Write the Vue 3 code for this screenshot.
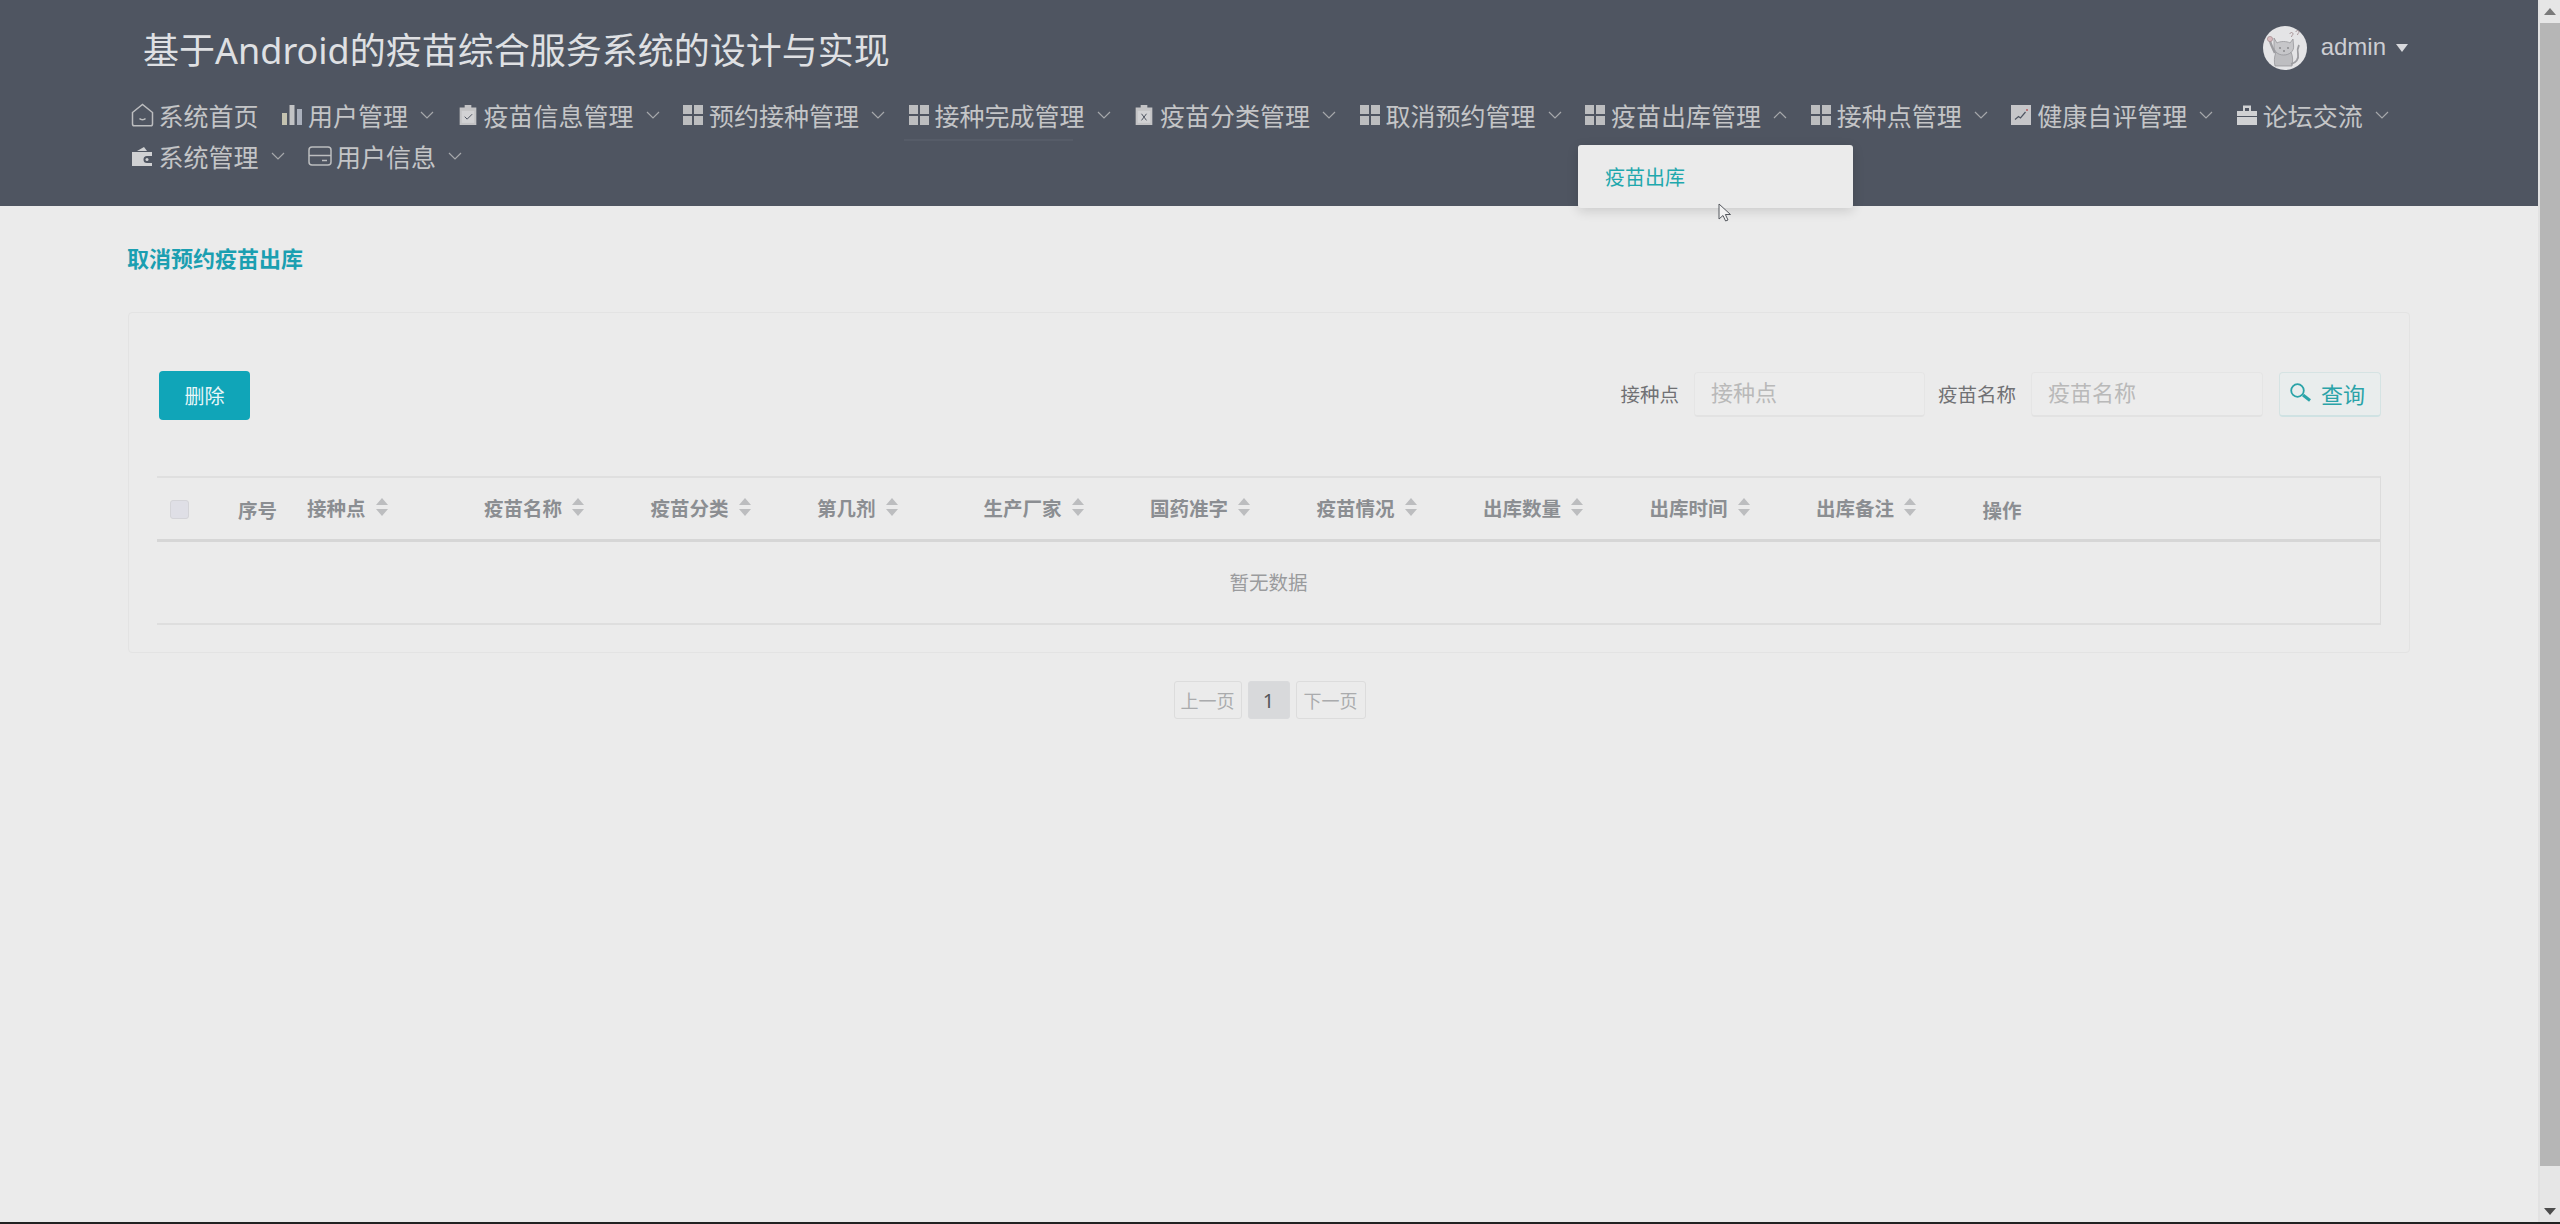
<script setup>
const navItems = [
  { name: "系统首页", icon: "home", arrow: false },
  { name: "用户管理", icon: "bars", arrow: true },
  { name: "疫苗信息管理", icon: "check", arrow: true },
  { name: "预约接种管理", icon: "grid", arrow: true },
  { name: "接种完成管理", icon: "grid", arrow: true, underline: true },
  { name: "疫苗分类管理", icon: "cross", arrow: true },
  { name: "取消预约管理", icon: "grid", arrow: true },
  { name: "疫苗出库管理", icon: "grid", arrow: true, open: true },
  { name: "接种点管理", icon: "grid", arrow: true },
  { name: "健康自评管理", icon: "chart", arrow: true },
  { name: "论坛交流", icon: "case", arrow: true },
  { name: "系统管理", icon: "wallet", arrow: true },
  { name: "用户信息", icon: "card", arrow: true },
]

const columns = ["接种点", "疫苗名称", "疫苗分类", "第几剂", "生产厂家", "国药准字", "疫苗情况", "出库数量", "出库时间", "出库备注"]
</script>

<template>
  <div class="screen">
    <div class="window">
      <main class="page">
        <header class="topbar">
          <div class="title-row">
            <h1>基于Android的疫苗综合服务系统的设计与实现</h1>
            <div class="user">
              <svg class="avatar" viewBox="0 0 44 44">
                <circle cx="22" cy="22" r="22" fill="#e4e4e6" />
                <!-- cat body, tail and head -->
                <path d="M13 26c-2 5-2 10-1 14h17c1-4 1-10-1-14z" fill="#bdbdc0" stroke="#8f8f93" stroke-width=".7" />
                <path d="M28 38c5-1 8-5 7-10-1-4 0-7 1-9" fill="none" stroke="#9c9ca0" stroke-width="1.8" />
                <path d="M11 12l3 5c3-2 10-2 13 0l3-4 .6 7c.6 5-4 9-10 9s-10-4-9.600-9z" fill="#c6c6c9" stroke="#8f8f93" stroke-width=".7" />
                <path d="M12 27c-2-4-4-8-5-12" fill="none" stroke="#9c9ca0" stroke-width="2.400" />
                <circle cx="7" cy="13" r="2.600" fill="#d7b9bd" stroke="#9a8084" stroke-width=".6" />
                <!-- confused marks -->
                <path d="M27 8c0-2 3-2 3 0 0 1-1.500 1.500-1.500 3M33 6c0-2 3-2 3 0 0 1-1.500 1.500-1.500 3" fill="none" stroke="#a08a8e" stroke-width=".9" />
                <path d="M16 22h2M24 22h2M20 25h2" stroke="#6c6c70" stroke-width="1.200" />
              </svg>
              <span class="user-name">admin</span>
              <span class="user-caret"></span>
            </div>
          </div>

          <nav class="nav">
            <div v-for="item in navItems" :key="item.name" class="nav-item">
              <svg v-if="item.icon === 'home'" class="icon icon-home" viewBox="0 0 23 24" fill="none" stroke="#bcbdbf" stroke-width="1.500">
                <path d="M1.500 9.500 11.500 1.500l10 8V21a1.800 1.800 0 0 1-1.800 1.800H3.300A1.800 1.800 0 0 1 1.500 21z" />
                <path d="M8.500 15.500c1.300 1.500 4.700 1.500 6 0" />
              </svg>
              <svg v-else-if="item.icon === 'bars'" class="icon" viewBox="0 0 20 20">
                <path d="M0 8h5v12H0z" fill="#c4c2b0" />
                <path d="M7.500 0h5v20h-5z" fill="#c2c3c5" />
                <path d="M15 4h5v16h-5z" fill="#aab0bc" />
              </svg>
              <svg v-else-if="item.icon === 'check'" class="icon" viewBox="0 0 20 24" fill="#c3c3c5">
                <path d="M0 3h6V0h8v3h6v21H0z" />
                <path d="M2.500 7h15v14.500h-15z" fill="#d2d2d4" />
                <path d="M6 14l3 3 6-6" fill="none" stroke="#4f5561" stroke-width="1.200" />
              </svg>
              <svg v-else-if="item.icon === 'grid'" class="icon" viewBox="0 0 20 20" fill="#bcbdbf">
                <path d="M0 0h9v9H0zM11 0h9v9h-9zM0 11h9v9H0zM11 11h9v9h-9z" />
              </svg>
              <svg v-else-if="item.icon === 'cross'" class="icon" viewBox="0 0 20 24" fill="#c3c3c5">
                <path d="M0 3h6V0h8v3h6v21H0z" />
                <path d="M2.500 7h15v14.500h-15z" fill="#d2d2d4" />
                <path d="M7 10.500l6 8M13 10.500l-6 8" fill="none" stroke="#4f5561" stroke-width="1.200" />
              </svg>
              <svg v-else-if="item.icon === 'chart'" class="icon" viewBox="0 0 20 20">
                <path d="M0 0h20v20H0z" fill="#c6c6c9" />
                <path d="M4 14.500l3.500-3 2 1.500 5-6" fill="none" stroke="#4f5561" stroke-width="1.200" />
                <circle cx="16" cy="5" r="1" fill="#b4565a" />
              </svg>
              <svg v-else-if="item.icon === 'case'" class="icon" viewBox="0 0 20 20" fill="#d0d1d3">
                <path d="M6 6V.500h8V6h-2V3H8v3z" />
                <path d="M0 6h20v5H0zM0 12h20v8H0z" />
              </svg>
              <svg v-else-if="item.icon === 'wallet'" class="icon icon-wide" viewBox="0 0 22 22" fill="#d0d1d3">
                <path d="M6 6 13 2l3 4z" />
                <path d="M1 7h20v4h-5a3.500 3.500 0 0 0 0 7h5v3H1z" />
                <circle cx="16" cy="14.500" r="1.500" />
              </svg>
              <svg v-else class="icon icon-card" viewBox="0 0 24 20" fill="none" stroke="#bcbdbf" stroke-width="1.500">
                <rect x="1" y="1" width="22" height="18" rx="3" />
                <path d="M1 9.500h22M14 14.500h5" />
              </svg>

              <span>{{ item.name }}</span>

              <svg v-if="item.arrow" class="chevron" :class="{ up: item.open }" viewBox="0 0 14 8" fill="none">
                <path d="M1 1l6 6 6-6" stroke="#a6a8ab" stroke-width="1.200" />
              </svg>

              <div v-if="item.underline" class="nav-underline"></div>
              <div v-if="item.open" class="dropdown">
                <a>疫苗出库</a>
              </div>
            </div>
          </nav>
        </header>

        <section class="content">
          <h2>取消预约疫苗出库</h2>

          <div class="card">
            <div class="toolbar">
              <button class="btn-delete">删除</button>
              <div class="search">
                <label>接种点</label>
                <input class="search-first" placeholder="接种点" />
                <label>疫苗名称</label>
                <input class="search-second" placeholder="疫苗名称" />
                <button class="btn-search">
                  <svg viewBox="0 0 22 19" width="22" height="19" fill="none" stroke="#2aa3a8">
                    <circle cx="7.500" cy="7.500" r="6.300" stroke-width="1.800" />
                    <path d="M13 12l7 5.500" stroke-width="3" />
                  </svg>
                  查询
                </button>
              </div>
            </div>

            <div class="table">
              <div class="thead">
                <div class="cell plain"><span class="checkbox"></span></div>
                <div class="cell plain">序号</div>
                <div v-for="col in columns" :key="col" class="cell">
                  {{ col }}
                  <svg class="sorter" viewBox="0 0 12 18" fill="#bcbdbf">
                    <path d="M6 0l6 7H0zM0 11h12l-6 7z" />
                  </svg>
                </div>
                <div class="cell plain">操作</div>
              </div>
              <div class="empty">暂无数据</div>
            </div>
          </div>

          <div class="pager">
            <a>上一页</a>
            <a class="current">1</a>
            <a>下一页</a>
          </div>
        </section>
      </main>

      <div class="scrollbar">
        <div class="arrow arrow-up"></div>
        <div class="thumb"></div>
        <div class="arrow arrow-down"></div>
      </div>

      <svg class="cursor" viewBox="0 0 13 19" width="13" height="19">
        <path d="M1 1v15l4-3.500 2.600 5.500 2.400-1-2.600-5.500H12.500z" fill="#f2f2f2" stroke="#55585e" stroke-width="1" />
      </svg>
    </div>
    <div class="edge"></div>
  </div>
</template>

<style scoped>
.screen {
  height: 1224px;
  display: flex;
  flex-direction: column;
  background: #ebebeb;
  font-family: "Noto Sans", "Noto Sans CJK SC", sans-serif;
  overflow: hidden;
}

.window {
  flex: 1;
  display: flex;
  position: relative;
  min-height: 0;
}

.page {
  flex: 1;
  min-width: 0;
}

.edge {
  height: 2px;
  background: #222;
}

.topbar {
  height: 206px;
  box-sizing: border-box;
  padding: 20px 128px 0;
  background: #4f5561;
}

.title-row {
  display: flex;
  justify-content: space-between;
  align-items: center;
  height: 60px;
  margin-bottom: 14px;
}

h1 {
  margin: -3px 0 0 15px;
  font-size: 36px;
  font-weight: 400;
  color: #dfe0e3;
}

.user {
  display: flex;
  align-items: center;
  margin: -4px 2px 0 0;
}

.avatar {
  width: 44px;
  height: 44px;
  margin-right: 14px;
}

.user-name {
  font-family: "Liberation Sans", sans-serif;
  font-size: 24px;
  margin-top: -2px;
  color: #cdced3;
}

.user-caret {
  width: 0;
  height: 0;
  margin-left: 10px;
  border-left: 6px solid transparent;
  border-right: 6px solid transparent;
  border-top: 8px solid #d8d9dd;
}

.nav {
  display: flex;
  flex-wrap: wrap;
  column-gap: 23.500px;
  padding-left: 2.500px;
}

.nav-item {
  position: relative;
  display: flex;
  align-items: center;
  height: 41px;
  font-size: 25px;
  color: #c4c5c7;
  white-space: nowrap;
}

.icon {
  width: 20px;
  height: 20px;
  margin-right: 6px;
}

.icon-home {
  width: 23px;
  height: 24px;
  margin-right: 5px;
}

.icon-wide {
  width: 22px;
  height: 22px;
}

.icon-card {
  width: 24px;
  height: 20px;
  margin-right: 4px;
}

.chevron {
  width: 14px;
  height: 8px;
  margin-left: 12px;
}

.chevron.up {
  transform: rotate(180deg);
}

.nav-underline {
  position: absolute;
  left: -5px;
  top: 45px;
  width: 169px;
  height: 2px;
  background: #565c68;
}

.dropdown {
  position: absolute;
  left: -7px;
  top: 51px;
  z-index: 5;
  width: 275px;
  height: 63px;
  display: flex;
  align-items: center;
  box-sizing: border-box;
  padding-left: 27px;
  background: #ebebeb;
  border-radius: 3px;
  box-shadow: 0 3px 12px rgba(0, 0, 0, 0.14);
  font-size: 20px;
  color: #1fa8ad;
}

.content {
  padding: 37px 128px 0 127px;
}

h2 {
  margin: 0;
  font-size: 22px;
  line-height: 30px;
  font-weight: 700;
  color: #1b9fb1;
}

.card {
  margin: 39px 0 0 1px;
  padding: 58px 28px 27px;
  border: 1px solid #e3e3e3;
  border-radius: 4px;
}

.toolbar {
  display: flex;
  justify-content: space-between;
  align-items: flex-start;
}

.btn-delete {
  width: 91px;
  height: 49px;
  margin-left: 2px;
  padding: 0;
  border: 0;
  border-radius: 4px;
  background: #10a5b8;
  color: #e8f6f8;
  font: inherit;
  font-size: 20px;
}

.search {
  display: flex;
  align-items: center;
  height: 46px;
}

.search label {
  margin: -2px 15px 0 0;
  font-size: 19.500px;
  color: #707174;
}

.search input {
  height: 45px;
  box-sizing: border-box;
  padding: 0 0 3px 16px;
  border: 1px solid #e5e5e5;
  border-bottom: 2px solid #e2e2e2;
  border-radius: 4px;
  outline: none;
  background: #ececec;
  font: inherit;
  font-size: 22px;
}

.search input::placeholder {
  color: #b9b9b9;
}

.search-first {
  width: 231px;
  margin-right: 13px;
}

.search-second {
  width: 232px;
  margin-right: 16px;
}

.btn-search {
  display: flex;
  align-items: center;
  gap: 9px;
  width: 102px;
  height: 45px;
  box-sizing: border-box;
  padding: 0 0 2px 10px;
  border: 1px solid #d5e3e3;
  border-bottom: 2px solid #cfe2e3;
  border-radius: 4px;
  background: #e9eded;
  color: #2aa3a8;
  font: inherit;
  font-size: 22px;
}

.table {
  margin-top: 56px;
  border-top: 2px solid #dfdfdf;
  border-right: 1px solid #dcdcdc;
  border-bottom: 2px solid #dedede;
}

.thead {
  display: grid;
  grid-template-columns: 81px 69px 177px repeat(9, 166.500px) 1fr;
  height: 61px;
  border-bottom: 3px solid #d6d6d6;
}

.cell {
  display: flex;
  align-items: center;
  font-size: 19.500px;
  font-weight: 700;
  color: #8b8e92;
  margin-top: -3px;
}

.cell.plain {
  margin-top: 1px;
}

.checkbox {
  width: 19px;
  height: 19px;
  margin: 1px 0 0 13px;
  box-sizing: border-box;
  border: 1px solid #d4d4d8;
  border-radius: 3px;
  background: #dfdfe6;
}

.sorter {
  width: 12px;
  height: 18px;
  margin-left: 10px;
}

.empty {
  height: 81px;
  line-height: 81px;
  text-align: center;
  font-size: 19.500px;
  color: #9a9b9d;
}

.pager {
  display: flex;
  justify-content: center;
  gap: 6px;
  margin: 28px 0 0 2px;
}

.pager a {
  width: 68px;
  height: 38px;
  line-height: 38px;
  box-sizing: border-box;
  border: 1px solid #dcdcdc;
  border-radius: 3px;
  text-align: center;
  font-size: 18px;
  color: #aaabad;
}

.pager a.current {
  width: 42px;
  border-color: #d9dadc;
  background: #d8d9db;
  color: #55565a;
  font-size: 20px;
}

.pager a:last-child {
  width: 70px;
}

.scrollbar {
  width: 22px;
  display: flex;
  flex-direction: column;
  align-items: center;
  box-sizing: border-box;
  border-left: 2px solid #e2e2e2;
  background: #e6e6e6;
}

.arrow {
  width: 0;
  height: 0;
  border-left: 6px solid transparent;
  border-right: 6px solid transparent;
}

.arrow-up {
  margin: 8px 0 8px;
  border-bottom: 7px solid #7a7a7a;
}

.thumb {
  flex: 1;
  width: 100%;
  margin-bottom: 42px;
  background: #b6b6b6;
}

.arrow-down {
  margin-bottom: 7px;
  border-top: 7px solid #4c4c4c;
}

.cursor {
  position: absolute;
  left: 1718px;
  top: 203px;
  z-index: 6;
}
</style>

<style>
html, body {
  margin: 0;
  overflow: hidden;
}
</style>
